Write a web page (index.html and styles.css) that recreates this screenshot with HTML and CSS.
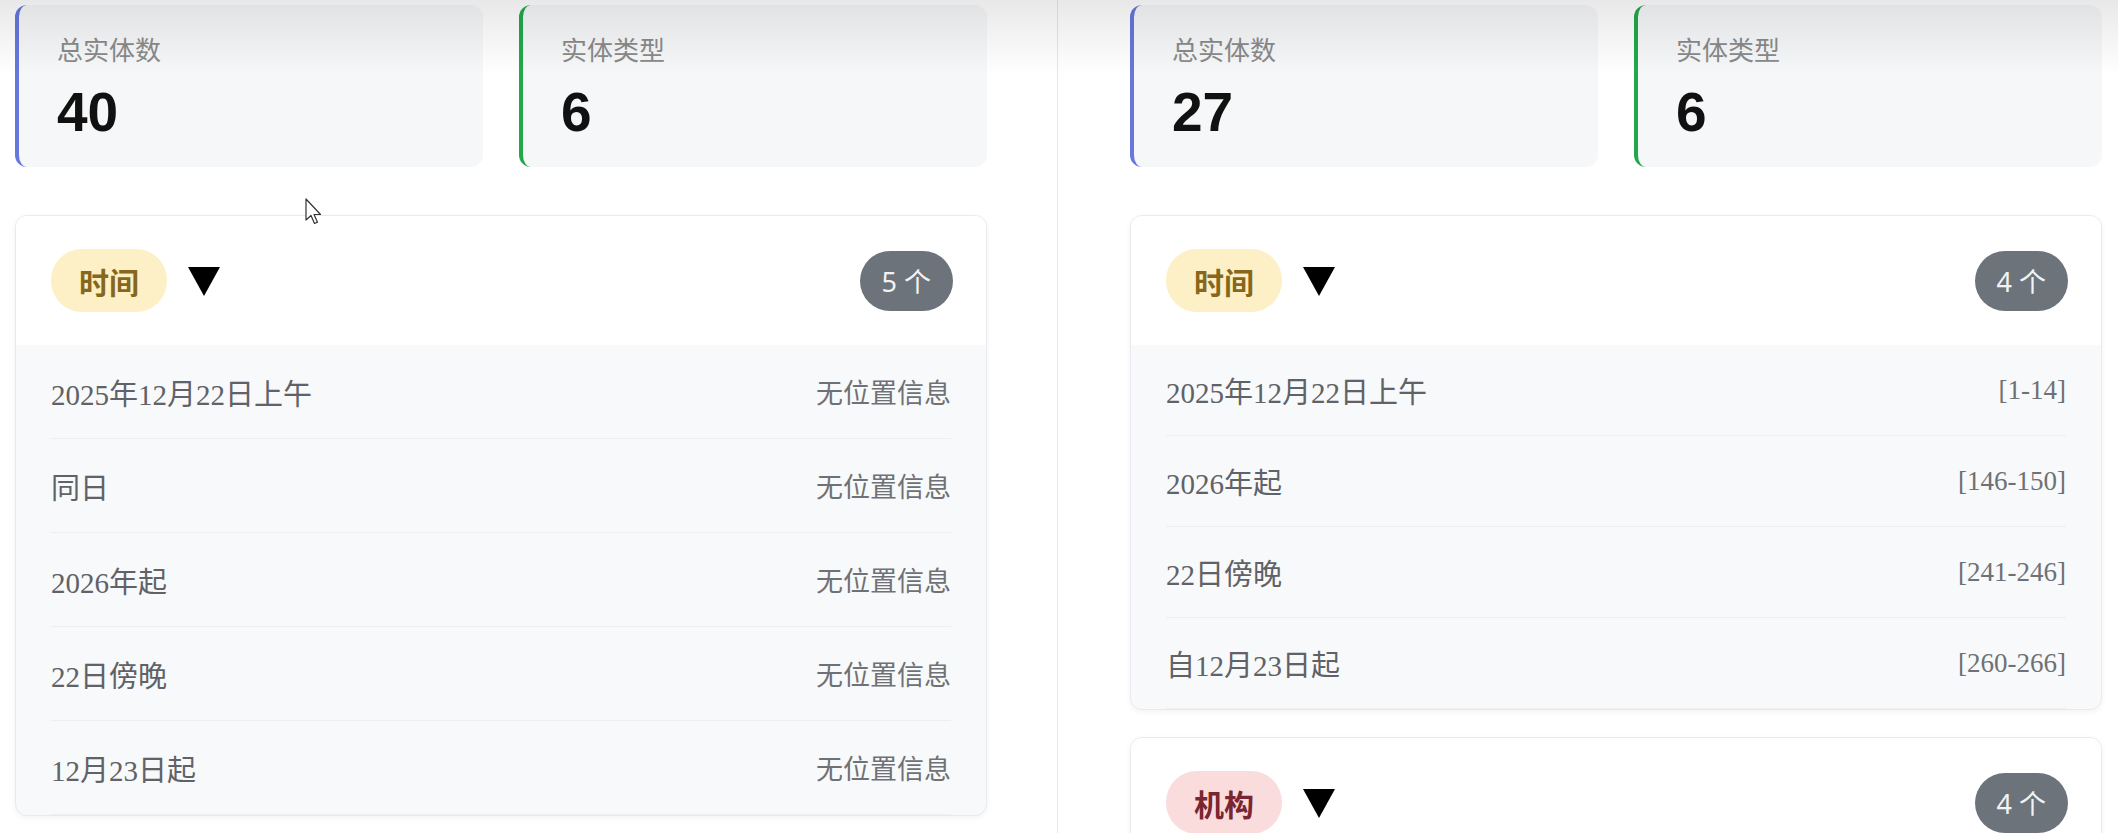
FILE: index.html
```html
<!DOCTYPE html>
<html lang="zh-CN">
<head>
<meta charset="utf-8">
<title>实体统计</title>
<link rel="stylesheet" href="styles.css">
</head>
<body>
<div class="page">
  <section class="panel">
    <div class="stats">
      <div class="stat stat-blue">
        <div class="stat-label">总实体数</div>
        <div class="stat-value">40</div>
      </div>
      <div class="stat stat-green">
        <div class="stat-label">实体类型</div>
        <div class="stat-value">6</div>
      </div>
    </div>
    <div class="group">
      <div class="group-head">
        <span class="pill pill-time">时间</span>
        <svg class="caret" width="32" height="30" viewBox="0 0 32 30"><polygon points="0,1 32,1 16,30" fill="#000"/></svg>
        <span class="count">5 个</span>
      </div>
      <ul class="rows">
        <li class="row"><span class="name">2025年12月22日上午</span><span class="pos">无位置信息</span></li>
        <li class="row"><span class="name">同日</span><span class="pos">无位置信息</span></li>
        <li class="row"><span class="name">2026年起</span><span class="pos">无位置信息</span></li>
        <li class="row"><span class="name">22日傍晚</span><span class="pos">无位置信息</span></li>
        <li class="row"><span class="name">12月23日起</span><span class="pos">无位置信息</span></li>
      </ul>
    </div>
  </section>
  <section class="panel panel-right">
    <div class="stats">
      <div class="stat stat-blue">
        <div class="stat-label">总实体数</div>
        <div class="stat-value">27</div>
      </div>
      <div class="stat stat-green">
        <div class="stat-label">实体类型</div>
        <div class="stat-value">6</div>
      </div>
    </div>
    <div class="group">
      <div class="group-head">
        <span class="pill pill-time">时间</span>
        <svg class="caret" width="32" height="30" viewBox="0 0 32 30"><polygon points="0,1 32,1 16,30" fill="#000"/></svg>
        <span class="count">4 个</span>
      </div>
      <ul class="rows rows-compact">
        <li class="row"><span class="name">2025年12月22日上午</span><span class="pos">[1-14]</span></li>
        <li class="row"><span class="name">2026年起</span><span class="pos">[146-150]</span></li>
        <li class="row"><span class="name">22日傍晚</span><span class="pos">[241-246]</span></li>
        <li class="row"><span class="name">自12月23日起</span><span class="pos">[260-266]</span></li>
      </ul>
    </div>
    <div class="group group-next">
      <div class="group-head">
        <span class="pill pill-org">机构</span>
        <svg class="caret" width="32" height="30" viewBox="0 0 32 30"><polygon points="0,1 32,1 16,30" fill="#000"/></svg>
        <span class="count">4 个</span>
      </div>
    </div>
  </section>
  <div class="top-shade"></div>
  <svg class="cursor" width="18" height="28" viewBox="0 0 18 28"><path d="M1,1 L1,22 L6,17.5 L9.5,25.5 L12.5,24.2 L9,16.5 L15.5,16.5 Z" fill="#fff" stroke="#333" stroke-width="1.2" stroke-linejoin="round"/></svg>
</div>
</body>
</html>
```
FILE: styles.css
```css
html, body {
  margin: 0;
  padding: 0;
  background: #ffffff;
  overflow: hidden;
}

body {
  font-family: "Noto Sans CJK SC", "Noto Sans", sans-serif;
  color: #222;
}

.page {
  position: relative;
  display: grid;
  grid-template-columns: 972px 1045px;
  column-gap: 70px;
  padding-left: 15px;
  height: 833px;
  box-sizing: border-box;
  overflow: hidden;
}

.panel {
  padding-top: 5px;
  box-sizing: border-box;
}

.panel-right {
  border-left: 1px solid #e6e6e6;
  padding-left: 72px;
}

.stats {
  display: grid;
  grid-template-columns: 1fr 1fr;
  column-gap: 36px;
}

.stat {
  height: 162px;
  box-sizing: border-box;
  background: #f6f7f9;
  border-radius: 12px;
  border-left: 4px solid #6677dd;
  padding: 26px 0 0 38px;
}

.stat-green {
  border-left-color: #22a84a;
}

.stat-label {
  font-size: 26px;
  line-height: 36px;
  color: #8a8a8a;
}

.stat-value {
  margin-top: 13px;
  font-family: "Liberation Sans", Arial, sans-serif;
  font-weight: 700;
  font-size: 55px;
  line-height: 64px;
  color: #111;
}

.group {
  margin-top: 48px;
  background: #f8f9fa;
  border: 1px solid #e8eaed;
  border-radius: 12px;
  box-shadow: 0 2px 6px rgba(0, 0, 0, 0.05);
  overflow: hidden;
}

.group-next {
  margin-top: 27px;
}

.group-head {
  height: 129px;
  background: #ffffff;
  display: flex;
  align-items: center;
  padding: 0 33px 0 35px;
}

.pill {
  display: inline-flex;
  align-items: center;
  height: 63px;
  padding: 0 28px;
  border-radius: 31px;
  font-size: 30px;
  font-weight: 700;
}

.pill-time {
  background: #fdf0c6;
  color: #86671c;
}

.pill-org {
  background: #fadcdd;
  color: #7a2632;
}

.caret {
  margin-left: 21px;
}

.count {
  margin-left: auto;
  display: inline-flex;
  align-items: center;
  height: 60px;
  padding: 0 22px;
  border-radius: 30px;
  background: #6c737b;
  color: #f2f2f2;
  font-family: "Noto Sans", "Noto Sans CJK SC", sans-serif;
  font-size: 27px;
}

.rows {
  list-style: none;
  margin: 0 35px;
  padding: 0;
}

.row {
  display: flex;
  align-items: center;
  justify-content: space-between;
  height: 93px;
  border-bottom: 1px solid #eceef0;
}

.rows-compact .row {
  height: 90px;
}

.name {
  font-family: "Liberation Serif", "Noto Sans CJK SC", serif;
  font-size: 29px;
  color: #5f6266;
}

.pos {
  font-family: "Liberation Serif", "Noto Sans CJK SC", serif;
  font-size: 27px;
  color: #6e7175;
}

.top-shade {
  position: absolute;
  left: 0;
  top: 0;
  width: 100%;
  height: 75px;
  background: linear-gradient(rgba(0, 0, 0, 0.09), rgba(0, 0, 0, 0));
  pointer-events: none;
}

.cursor {
  position: absolute;
  left: 305px;
  top: 198px;
}
```
